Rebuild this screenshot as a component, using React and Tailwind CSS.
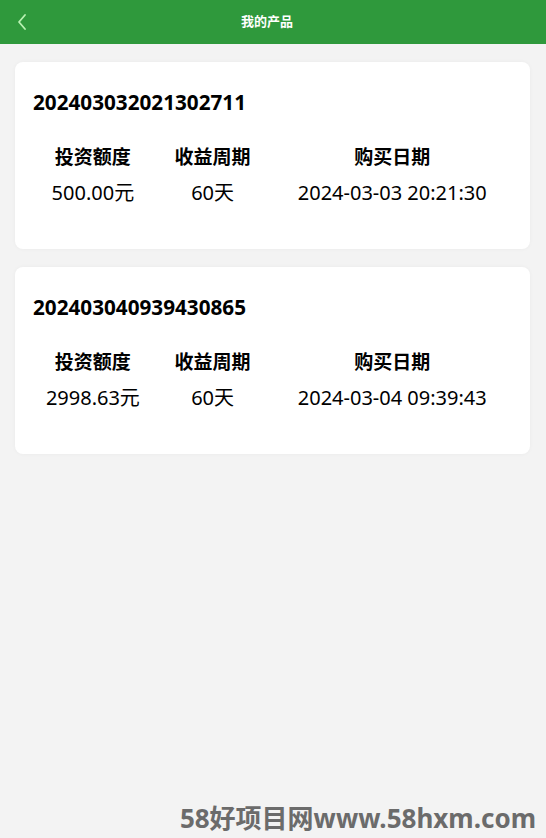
const orders = [
  { no: "202403032021302711", amount: "500.00元", period: "60天", date: "2024-03-03 20:21:30" },
  { no: "202403040939430865", amount: "2998.63元", period: "60天", date: "2024-03-04 09:39:43" },
];

const font = { fontFamily: '"Noto Sans", "Noto Sans CJK SC", sans-serif' };

function OrderCard({ order }) {
  return (
    <div className="bg-white rounded-lg px-[18px] pt-[26px] pb-[42px] shadow-[0_0_4px_rgba(0,0,0,0.04)]">
      <div className="text-[20.7px] leading-[28px] font-bold text-black">{order.no}</div>
      <div className="grid grid-cols-4 mt-[27px] text-black text-center">
        <div className="text-[19px] leading-[28px] font-bold">投资额度</div>
        <div className="text-[19px] leading-[28px] font-bold">收益周期</div>
        <div className="col-span-2 text-[19px] leading-[28px] font-bold">购买日期</div>
        <div className="text-[20px] leading-[28px] mt-[8px]">{order.amount}</div>
        <div className="text-[20px] leading-[28px] mt-[8px]">{order.period}</div>
        <div className="col-span-2 text-[20px] leading-[28px] mt-[8px]">{order.date}</div>
      </div>
    </div>
  );
}

export default function App() {
  return (
    <div className="w-[546px] h-[838px] bg-[#f3f3f3] flex flex-col relative overflow-hidden" style={font}>
      {/* Header */}
      <div className="h-[44px] bg-[#2f993c] flex items-center justify-center relative shrink-0">
        <svg className="absolute left-[16px] top-[13px]" width="12" height="18" viewBox="0 0 12 18">
          <path d="M9 2 L3 9 L9 16" fill="none" stroke="#b9f2b3" strokeWidth="1.8" strokeLinecap="round" strokeLinejoin="round" />
        </svg>
        <span className="text-white text-[13px] font-bold mr-[12px]">我的产品</span>
      </div>

      {/* List */}
      <div className="flex flex-col gap-[18px] px-[15px] pt-[18px] pr-[16px]">
        {orders.map((o) => (
          <OrderCard key={o.no} order={o} />
        ))}
      </div>

      {/* Watermark */}
      <div className="absolute right-[10px] bottom-[2px] text-[26px] font-bold text-[#6b6b6b] leading-[36px]">
        58好项目网www.58hxm.com
      </div>
    </div>
  );
}
